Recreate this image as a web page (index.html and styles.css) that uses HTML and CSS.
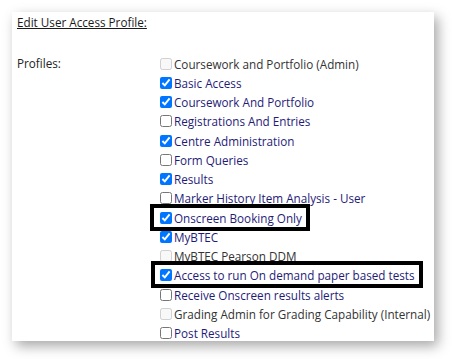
FILE: index.html
```html
<!DOCTYPE html>
<html>
<head>
<meta charset="utf-8">
<link rel="stylesheet" href="styles.css">
</head>
<body>
<div class="card">
  <div class="title">Edit User Access Profile:</div>
  <div class="form">
    <div class="label">Profiles:</div>
    <ul class="list">
      <li class="dis"><input type="checkbox" disabled><span>Coursework and Portfolio (Admin)</span></li>
      <li><input type="checkbox" checked><span>Basic Access</span></li>
      <li><input type="checkbox" checked><span>Coursework And Portfolio</span></li>
      <li><input type="checkbox"><span>Registrations And Entries</span></li>
      <li><input type="checkbox" checked><span>Centre Administration</span></li>
      <li><input type="checkbox"><span>Form Queries</span></li>
      <li><input type="checkbox" checked><span>Results</span></li>
      <li><input type="checkbox"><span>Marker History Item Analysis - User</span></li>
      <li><span class="hl hl1"><input type="checkbox" checked><span>Onscreen Booking Only</span></span></li>
      <li><input type="checkbox" checked><span>MyBTEC</span></li>
      <li class="dis"><input type="checkbox" disabled><span>MyBTEC Pearson DDM</span></li>
      <li><span class="hl hl2"><input type="checkbox" checked><span>Access to run On demand paper based tests</span></span></li>
      <li><input type="checkbox"><span>Receive Onscreen results alerts</span></li>
      <li class="dis"><input type="checkbox" disabled><span>Grading Admin for Grading Capability (Internal)</span></li>
      <li><input type="checkbox"><span>Post Results</span></li>
    </ul>
  </div>
</div>
</body>
</html>
```
FILE: styles.css
```css
html, body {
  margin: 0;
  padding: 0;
  background: #fff;
}
body {
  width: 452px;
  height: 359px;
  overflow: hidden;
  font-family: "Open Sans", "Liberation Sans", sans-serif;
  font-size: 11.7px;
  color: #222;
}
.card {
  margin: 12px 0 0 12px;
  width: 422px;
  height: 329px;
  box-sizing: border-box;
  background: #fff;
  box-shadow: 4px 5px 12px rgba(0, 0, 0, 0.35);
  padding: 1px 0 0 5px;
}
.title {
  text-decoration: underline;
  line-height: 18px;
  color: #1a1a1a;
}
.form {
  display: flex;
  margin-top: 23px;
}
.label {
  width: 143px;
  flex-shrink: 0;
  line-height: 18px;
  color: #222;
}
.list {
  list-style: none;
  margin: 0;
  padding: 0;
}
.list li {
  height: 19.25px;
  display: flex;
  align-items: center;
  color: #1f1c78;
  white-space: nowrap;
}
.list li.dis {
  color: #333;
}
.list input {
  margin: 0 2px 0 0;
  width: 12px;
  height: 12px;
}
.hl {
  position: relative;
  display: inline-flex;
  align-items: center;
}
.hl::after {
  content: "";
  position: absolute;
  top: -6px;
  bottom: -5px;
  left: -10px;
  right: -8px;
  border: 4px solid #000;
}
.hl2::after {
  left: -9px;
  right: -8px;
}
```
